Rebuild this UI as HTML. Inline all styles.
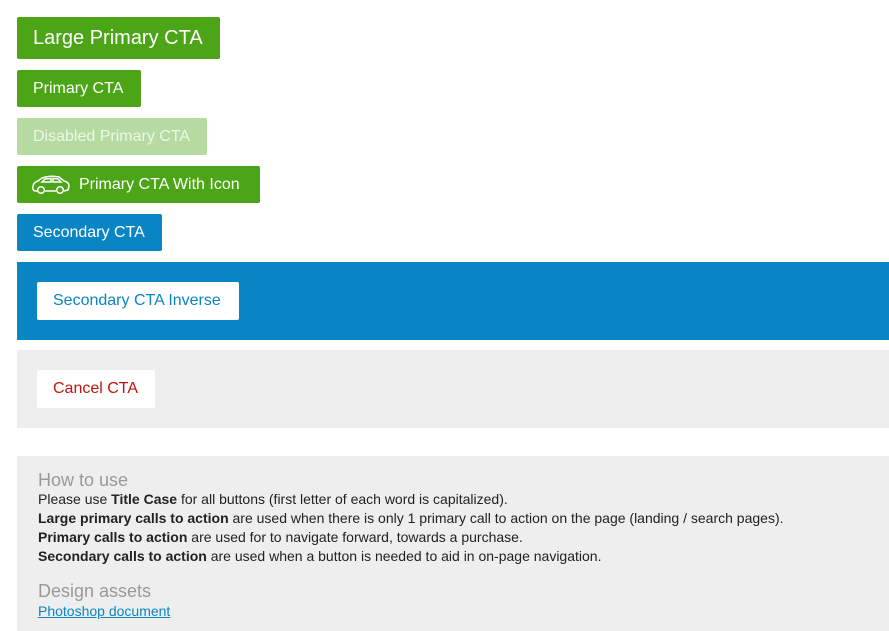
<!DOCTYPE html>
<html><head><style>
body{margin:0;background:#fff;font-family:"Liberation Sans",Arial,sans-serif;width:889px;height:631px;overflow:hidden;position:relative}
.b{position:absolute;left:17px;color:#fff;border-radius:2px;display:flex;align-items:center;box-sizing:border-box;padding:0 16px;font-size:16px;white-space:nowrap}
.g{background:#4ba516}
.bl{background:#0a85c3}
.band{position:absolute;left:17px;width:872px;height:78px}
.w{position:absolute;left:20px;top:20px;height:38px;background:#fff;border-radius:2px;display:flex;align-items:center;padding:0 16px;font-size:16px;box-sizing:border-box;white-space:nowrap}
.info{position:absolute;left:17px;top:456px;width:872px;height:175px;background:#eee;padding-left:21px;box-sizing:border-box;font-size:14px;color:#222}
.h{color:#999;font-size:18px;position:absolute;left:21px}
.l{position:absolute;left:21px;white-space:nowrap}
</style></head><body>
<div class="b g" style="top:17px;height:42px;width:203px;font-size:20px">Large Primary CTA</div>
<div class="b g" style="top:70px;height:37px;width:124px">Primary CTA</div>
<div class="b" style="top:118px;height:37px;width:190px;background:#b6dba2;color:#eef7e8">Disabled Primary CTA</div>
<div class="b g" style="top:166px;height:37px;width:243px">
<svg width="40" height="22" viewBox="0 0 40 22" style="margin-right:8px;margin-left:-2px;flex:none" fill="none" stroke="#fff" stroke-width="1.5"><path d="M4 17 Q1 16 2 12 Q3 8 7 7 L11 4 Q19 1 28 3 L33 7 Q38 8 38 12 L37 16 L33 17 M25 17 L14 17 M7 17 L4 17"/><circle cx="10" cy="16" r="3.3"/><circle cx="29" cy="16" r="3.3"/><path d="M11 8 L14 5 L20 4.5 L20 8 Z M22 4.5 L27 5 L30 8 L22 8 Z"/></svg>Primary CTA With Icon</div>
<div class="b bl" style="top:214px;height:37px;width:145px">Secondary CTA</div>
<div class="band bl" style="top:262px;background:#0a85c3"><div class="w" style="color:#0a85c3;width:202px">Secondary CTA Inverse</div></div>
<div class="band" style="top:350px;background:#eee"><div class="w" style="color:#c0140e;width:118px">Cancel CTA</div></div>
<div class="info">
<div class="h" style="top:14px">How to use</div>
<div class="l" style="top:35px">Please use <b>Title Case</b> for all buttons (first letter of each word is capitalized).</div>
<div class="l" style="top:54px"><b>Large primary calls to action</b> are used when there is only 1 primary call to action on the page (landing / search pages).</div>
<div class="l" style="top:73px"><b>Primary calls to action</b> are used for to navigate forward, towards a purchase.</div>
<div class="l" style="top:92px"><b>Secondary calls to action</b> are used when a button is needed to aid in on-page navigation.</div>
<div class="h" style="top:125px">Design assets</div>
<div class="l" style="top:147px;color:#0a85c3;text-decoration:underline">Photoshop document</div>
</div>
</body></html>
